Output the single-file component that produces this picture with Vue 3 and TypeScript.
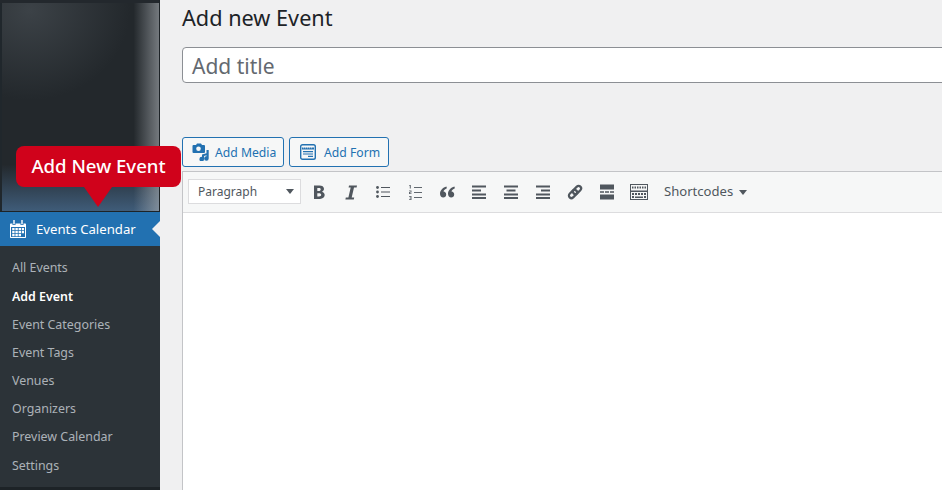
<script setup lang="ts">
const items: { label: string; current?: boolean }[] = [
  { label: 'All Events' },
  { label: 'Add Event', current: true },
  { label: 'Event Categories' },
  { label: 'Event Tags' },
  { label: 'Venues' },
  { label: 'Organizers' },
  { label: 'Preview Calendar' },
  { label: 'Settings' },
]
</script>

<template>
  <div class="page">
    <aside class="sidebar">
      <div class="blur"></div>
      <div class="active">
        <svg class="cal" width="16" height="18" viewBox="0 0 16 18">
          <path fill="#fff" d="M.8 3.500h14.400a.8.8 0 0 1 .8.800v12.900a.8.8 0 0 1-.8.800H.8a.8.8 0 0 1-.8-.8V4.300a.8.8 0 0 1 .8-.8z"/>
          <path fill="#2271b1" d="M1 7h14v10H1z"/>
          <path fill="#2271b1" d="M2.500 2h3v3h-3zM10.500 2h3v3h-3z"/>
          <path fill="#fff" d="M3.300 0h1.400v4.300H3.300zM11.300 0h1.400v4.300h-1.400zM2.200 8h2.400v2.300H2.200zM5.400 8h2.400v2.300H5.400zM8.600 8H11v2.300H8.600zM11.800 8h2.200v2.300h-2.200zM2.200 11h2.400v2.300H2.200zM5.400 11h2.400v2.300H5.400zM8.600 11H11v2.300H8.600zM11.800 11h2.200v2.300h-2.200zM2.200 14h2.400v2.200H2.200zM5.400 14h2.400v2.200H5.400zM8.600 14H11v2.200H8.600z"/>
        </svg>
        <span>Events Calendar</span>
        <i class="notch"></i>
      </div>
      <ul class="submenu">
        <li v-for="item in items" :key="item.label" :class="{ current: item.current }">{{ item.label }}</li>
      </ul>
    </aside>

    <main class="main">
      <h1>Add new Event</h1>
      <div class="title">Add title</div>
      <div class="buttons">
        <button class="btn media">
          <svg width="18" height="18" viewBox="0 0 18 18">
            <path fill="#2271b1" d="M1.500 2H4l1-1.500h4L10 2h2a1 1 0 0 1 1 1v6a1 1 0 0 1-1 1H1.500a1 1 0 0 1-1-1V3a1 1 0 0 1 1-1z"/>
            <circle cx="6.500" cy="5.800" r="2.300" fill="#f6f7f7"/>
            <path fill="#2271b1" d="M10 11.500l4.500-1.300V7h2.200v8.500a2.300 2.300 0 1 1-2.200-2.300v-1l-2.500.7v3.300a2.300 2.300 0 1 1-2-2.300z"/>
          </svg>
          <span>Add Media</span>
        </button>
        <button class="btn form">
          <svg width="16" height="16" viewBox="0 0 16 16">
            <rect x=".7" y=".7" width="14.600" height="14.600" rx="1.800" fill="none" stroke="#2271b1" stroke-width="1.400"/>
            <path fill="#2271b1" d="M2 3.500h12v2H2zM3 7h10v1.200H3zM3 9.400h10v1.200H3zM8 11.800h5V13H8z"/>
            <path fill="#f6f7f7" d="M3 3.500h1v.8H3zM5 3.500h1v.8H5zM7 3.500h1v.8H7zM9 3.500h1v.8H9zM11 3.500h1v.8h-1z"/>
          </svg>
          <span>Add Form</span>
        </button>
      </div>
      <section class="editor">
        <div class="toolbar">
          <div class="select"><span>Paragraph</span><i class="caret"></i></div>
          <div class="tools">
            <svg class="ico" viewBox="0 0 20 20"><path fill="#50575e" d="M5 3.500h5.500c2.500 0 4.500 1.200 4.500 3.300 0 1.400-.8 2.500-2.100 3 1.700.4 2.800 1.700 2.800 3.300 0 2.300-2 3.900-4.700 3.900H5zm3.300 5.400h1.600c1.100 0 1.800-.6 1.800-1.500S11 6 9.900 6H8.300zm0 5.600H10c1.300 0 2.200-.6 2.200-1.700 0-1-.9-1.600-2.200-1.600H8.300z"/></svg>
            <svg class="ico" viewBox="0 0 20 20"><path fill="#50575e" d="M8 3.500h8l-.4 2h-2.600l-2.300 10h2.500l-.4 2H4.400l.4-2h2.600l2.300-10H7.600z"/></svg>
            <svg class="ico" viewBox="0 0 20 20"><g fill="#50575e"><circle cx="4.500" cy="5.500" r="1.400"/><circle cx="4.500" cy="10" r="1.400"/><circle cx="4.500" cy="14.500" r="1.400"/><path d="M8 5h9v1.100H8zM8 9.500h9v1.100H8zM8 14h9v1.100H8z"/></g></svg>
            <svg class="ico" viewBox="0 0 20 20"><path fill="#50575e" d="M9 5h8v1H9zM9 10h8v1H9zM9 15h8v1H9zM4.800 3h1v3.500h-1v-2.700l-.8.300v-.7zM4 8.500h2.500v2H5v.8h1.500v.7H4v-2h1.500v-.8H4zM4 14h2.500v4H4v-.7h1.500v-1H4.600v-.6h.9v-1H4z" opacity=".9"/></svg>
            <svg class="ico" viewBox="0 0 20 20"><path fill="#50575e" d="M9.400 4.500C6 5.700 3 8 3 11.800 3 14 4.400 15.500 6.200 15.500c1.700 0 3-1.300 3-3 0-1.600-1.100-2.800-2.700-2.900.3-1.300 1.500-2.500 3.400-3.300zM17.400 4.500c-3.400 1.200-6.400 3.500-6.400 7.300 0 2.200 1.400 3.700 3.200 3.700 1.700 0 3-1.300 3-3 0-1.600-1.100-2.800-2.700-2.900.3-1.300 1.500-2.500 3.400-3.300z"/></svg>
            <svg class="ico" viewBox="0 0 20 20"><path fill="#50575e" d="M3 3.500h14v2H3zM3 7.500h9v2H3zM3 11.500h14v2H3zM3 15h14v2H3z"/></svg>
            <svg class="ico" viewBox="0 0 20 20"><path fill="#50575e" d="M3 3.500h14v2H3zM5.500 7.500h9v2h-9zM3 11.500h14v2H3zM3 15h14v2H3z"/></svg>
            <svg class="ico" viewBox="0 0 20 20"><path fill="#50575e" d="M3 3.500h14v2H3zM8 7.500h9v2H8zM3 11.500h14v2H3zM3 15h14v2H3z"/></svg>
            <svg class="ico" viewBox="0 0 20 20"><g fill="none" stroke="#50575e" stroke-width="2.200"><rect x="9.500" y="3.250" width="5" height="9.500" rx="2.500" transform="rotate(45 12 8)"/><rect x="5.500" y="7.250" width="5" height="9.500" rx="2.500" transform="rotate(45 8 12)"/></g></svg>
            <svg class="ico" viewBox="0 0 20 20"><path fill="#50575e" d="M3 2.500h14v5H3zM3 12.500h14v5H3zM3 9.300h4v1.400H3zM8 9.300h4v1.400H8zM13 9.300h4v1.400h-4z"/></svg>
            <svg class="ico" viewBox="0 0 20 20"><path fill="#50575e" fill-rule="evenodd" d="M1 2h18v16H1zM2 3v5.500h16V3zM2 10v7h16v-7z"/><path fill="#50575e" d="M3 4.500h1.500v2H3zM5.500 4.500H7v2H5.500zM8 4.500h1.500v2H8zM10.500 4.500H12v2h-1.500zM13 4.500h1.500v2H13zM15.500 4.500H17v2h-1.500zM3 11h2v2H3zM6 11h2v2H6zM9 11h2v2H9zM12 11h2v2h-2zM15 11h2v2h-2zM3 14h2v2H3zM6 14.500h8V16H6zM15 14h2v2h-2z"/></svg>
          </div>
          <div class="shortcodes">Shortcodes <i class="caret small"></i></div>
        </div>
        <div class="body"></div>
      </section>
    </main>

    <div class="pointer">
      <span>Add New Event</span>
    </div>
  </div>
</template>

<style>
html, body { margin: 0; overflow: hidden; }
</style>

<style scoped>
.page {
  position: relative;
  display: flex;
  width: 942px;
  height: 490px;
  overflow: hidden;
  background: #f0f0f1;
  font-family: "Noto Sans", sans-serif;
}
.sidebar {
  width: 160px;
  flex: none;
  display: flex;
  flex-direction: column;
  background: #1d2327;
}
.blur {
  height: 212px;
  flex: none;
  border-right: 1px solid #1d2327;
  border-bottom: 1px solid #1d2327;
  box-sizing: border-box;
  background:
    linear-gradient(180deg, #23282d 0 3px, transparent 3px),
    linear-gradient(90deg, #20272c 0 2px, transparent 2px),
    linear-gradient(90deg, transparent 84%, rgba(170, 175, 180, .6) 100%),
    linear-gradient(180deg, transparent 78%, rgba(70, 105, 140, .8) 100%),
    radial-gradient(ellipse 100px 90px at 30px 10px, #3c4247, transparent),
    #23282c;
}
.active {
  position: relative;
  display: flex;
  align-items: center;
  height: 34px;
  flex: none;
  padding-left: 10px;
  background: #2271b1;
  color: #fff;
  font-size: 13.2px;
}
.cal { margin-right: 10px; flex: none; }
.notch {
  position: absolute;
  right: 0;
  top: 9px;
  border: 8px solid transparent;
  border-left-width: 0;
  border-right-color: #f0f0f1;
}
.submenu {
  list-style: none;
  margin: 0;
  height: 241px;
  flex: none;
  box-sizing: border-box;
  padding: 8.4px 0 0 12px;
  background: #2c3338;
  font-size: 12.4px;
}
.submenu li {
  height: 28.17px;
  line-height: 28px;
  color: rgba(240, 246, 252, .66);
}
.submenu li:last-child { margin-top: .5px; }
.submenu li.current {
  color: #fff;
  font-weight: 600;
}
.main {
  flex: 1;
  min-width: 0;
  padding-left: 22px;
  margin-right: -20px;
}
h1 {
  margin: 0;
  height: 47px;
  font-size: 21.7px;
  font-weight: 400;
  line-height: 36px;
  color: #1d2327;
}
.title {
  height: 36px;
  box-sizing: border-box;
  border: 1px solid #8c8f94;
  border-radius: 4px;
  background: #fff;
  padding-left: 9px;
  font-size: 21px;
  line-height: 36px;
  color: #646970;
}
.buttons {
  display: flex;
  gap: 5px;
  margin-top: 54px;
  height: 30px;
}
.btn {
  display: flex;
  align-items: center;
  box-sizing: border-box;
  height: 30px;
  border: 1px solid #2271b1;
  border-radius: 3px;
  background: #f6f7f7;
  color: #2271b1;
  font: 12.2px "Noto Sans", sans-serif;
  padding: 0;
}
.btn.media { width: 102px; padding-left: 9px; gap: 5px; }
.btn.form { width: 100px; padding-left: 10px; gap: 8px; }
.editor {
  margin-top: 4px;
  border: 1px solid #c3c4c7;
  border-right: 0;
  background: #fff;
  height: 330px;
}
.toolbar {
  display: flex;
  align-items: center;
  height: 41px;
  box-sizing: border-box;
  border-bottom: 1px solid #dcdcde;
  background: #f6f7f7;
  padding-left: 5px;
}
.select {
  display: flex;
  align-items: center;
  justify-content: space-between;
  box-sizing: border-box;
  width: 113px;
  height: 25px;
  margin-top: -1px;
  border: 1px solid #dcdcde;
  background: #fff;
  padding: 0 6px 0 9px;
  font-size: 12px;
  line-height: 21px;
  color: #50575e;
}
.select span { margin-top: -1px; }
.caret {
  border: 4px solid transparent;
  border-top: 5px solid #50575e;
  border-bottom: 0;
}
.caret.small {
  display: inline-block;
  border-width: 4px;
  border-top-width: 5px;
  border-bottom: 0;
  margin-left: 2px;
  vertical-align: 1px;
}
.tools {
  display: flex;
  gap: 12px;
  margin-left: 8px;
  margin-top: -1px;
}
.ico { width: 20px; height: 20px; flex: none; }
.shortcodes {
  margin-left: 15px;
  font-size: 13.1px;
  color: #50575e;
  margin-top: -2px;
}
.pointer {
  position: absolute;
  left: 16px;
  top: 146px;
  width: 165px;
  height: 41px;
  box-sizing: border-box;
  border-radius: 8px;
  background: #d0021b;
  color: #fff;
  font-size: 18.6px;
  font-weight: 500;
  line-height: 40px;
  text-align: center;
}
.pointer::after {
  content: "";
  position: absolute;
  left: 68px;
  top: 41px;
  border: 14px solid transparent;
  border-top: 20px solid #d0021b;
  border-bottom: 0;
}
</style>
